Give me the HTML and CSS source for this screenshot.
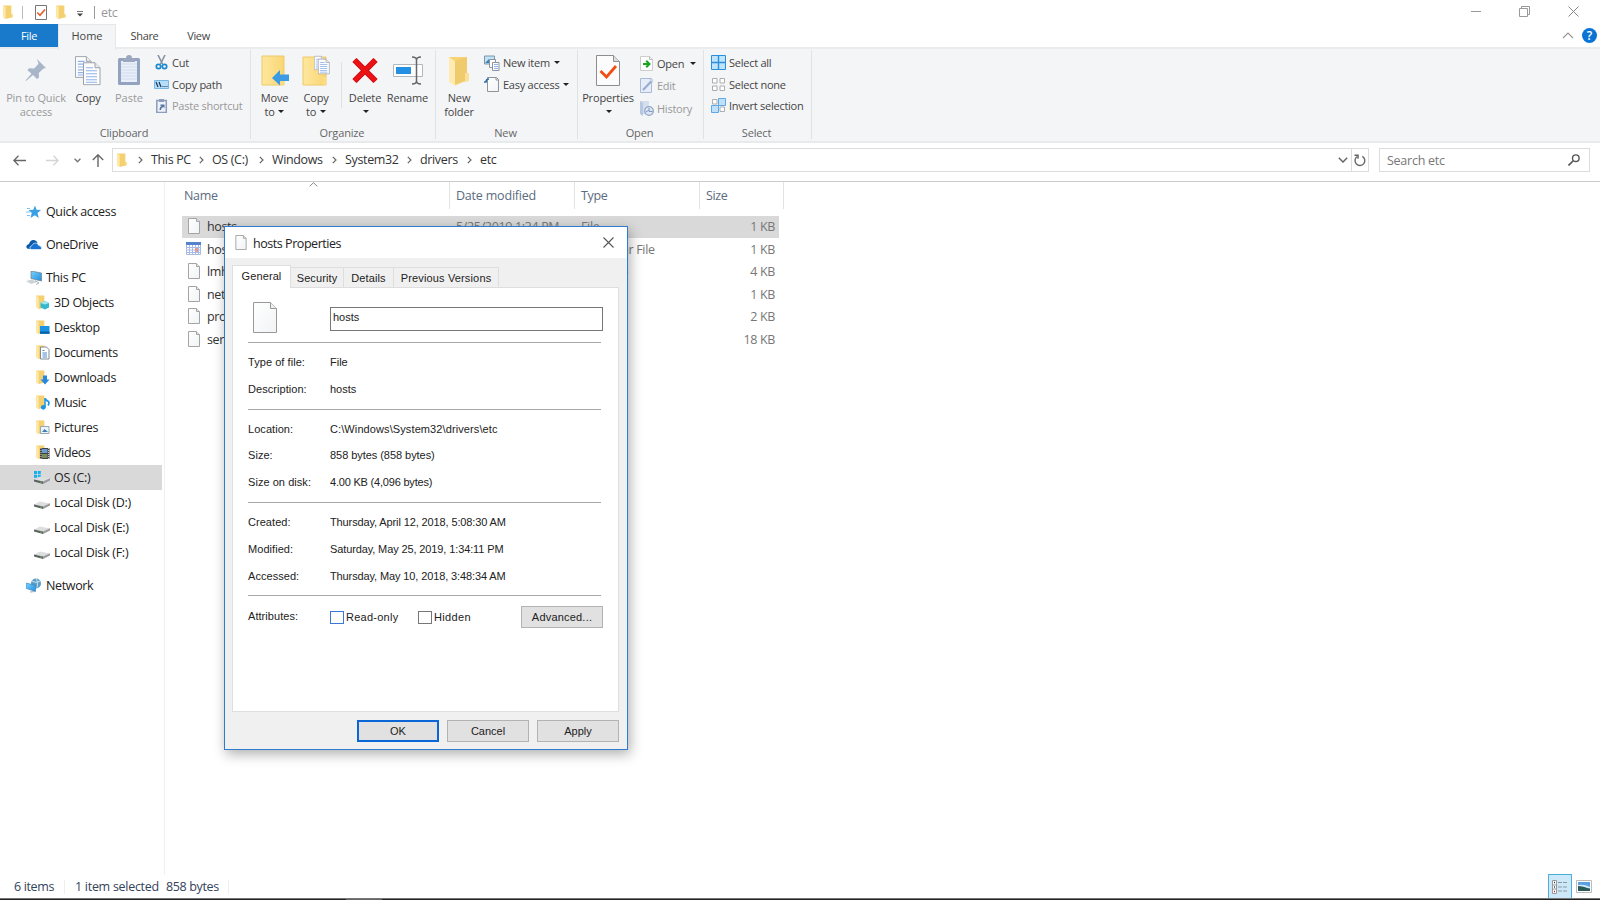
FILE: index.html
```html
<!DOCTYPE html>
<html lang="en">
<head>
<meta charset="utf-8">
<title>etc</title>
<link rel="stylesheet" href="styles.css">
</head>
<body>
<svg class="defs" width="0" height="0">
  <defs>
    <linearGradient id="gold" x1="0" x2="1"><stop offset="0" stop-color="#ffe79e"/><stop offset="1" stop-color="#f9d675"/></linearGradient>
    <linearGradient id="paper" x1="0" y1="0" x2="1" y2="1"><stop offset="0" stop-color="#fff"/><stop offset="1" stop-color="#f1f3f5"/></linearGradient>
    <linearGradient id="sky" x1="0" y1="0" x2="1" y2="1"><stop offset="0" stop-color="#7fd0fa"/><stop offset="1" stop-color="#1d8ee0"/></linearGradient>
    <symbol id="folder" viewBox="0 0 10 15"><path d="M0 .5h8.6v9.3H10V13L2.4 15 0 13z" fill="#f5d070"/><path d="M0 .7 2.5 2v13L0 13.2z" fill="#ffe9a8"/><path d="M8.6 9.8H10V13H8.6z" fill="#fbdc85"/></symbol>
    <symbol id="page" viewBox="0 0 12 16"><path d="M.5.5h8l3 3v12H.5z" fill="url(#paper)" stroke="#a4a4a4"/><path d="M8.5.5v3h3" fill="#e4e6e8" stroke="#a4a4a4"/></symbol>
    <symbol id="chev" viewBox="0 0 5 8"><path d="M.8.8 4 4 .8 7.2" fill="none" stroke="#666" stroke-width="1.2"/></symbol>
    <symbol id="disk" viewBox="0 0 16 9"><path d="M0 4.400 6 1.500l10 1.900-7 3.400z" fill="#dcdedf"/><path d="M0 4.400 9 6.600V9L0 6.600z" fill="#5c615f"/><path d="M9 6.600 16 3.200v2.400L9 9z" fill="#999c9d"/><path d="M6 7l1.500.4" stroke="#5fc25a"/></symbol>
    <symbol id="sheet" viewBox="0 0 18 23"><path d="M.5.5h11.5l5 5v17H.5z" fill="#fdfdfe" stroke="#9aa0a8"/><path d="M12 .5v5h5" fill="#e8eaec" stroke="#9aa0a8"/><path d="M3 5.500h7M3 8.500h11M3 11.500h11M3 14.500h11M3 17.500h11M3 20h11" stroke="#8fb4ec" stroke-width="1.200"/></symbol>
  </defs>
</svg>

<div class="window">
  <header class="titlebar">
    <svg class="tb-folder" width="10" height="14"><use href="#folder"/></svg>
    <i class="tb-sep"></i>
    <svg class="tb-check" width="12" height="15" viewBox="0 0 12 15"><path d="M.5.5h11v14H.5z" fill="#fff" stroke="#777"/><path d="M2.300 7.500 5 10.300 10 4.500" fill="none" stroke="#e8602c" stroke-width="1.700"/></svg>
    <svg class="tb-folder2" width="10" height="14"><use href="#folder"/></svg>
    <svg class="tb-more" width="6" height="6" viewBox="0 0 6 6"><path d="M0 .5h6" stroke="#777"/><path d="M0 2.500h6L3 5.500z" fill="#444"/></svg>
    <i class="tb-sep dark"></i>
    <span class="tb-title">etc</span>
    <div class="win-buttons">
      <svg width="10" height="10" viewBox="0 0 10 10"><path d="M0 4.500h10" stroke="#999"/></svg>
      <svg width="11" height="11" viewBox="0 0 11 11"><path d="M.5 2.500h8v8h-8zM2.500 2.500v-2h8v8h-2" fill="none" stroke="#999"/></svg>
      <svg width="11" height="11" viewBox="0 0 11 11"><path d="m.5.5 10 10m0-10-10 10" stroke="#888"/></svg>
    </div>
  </header>

  <nav class="tabs">
    <span class="tab file">File</span><span class="tab home">Home</span><span class="tab share">Share</span><span class="tab view">View</span>
    <div class="tab-tools">
      <svg width="12" height="7" viewBox="0 0 12 7"><path d="m1 6 5-5 5 5" fill="none" stroke="#999" stroke-width="1.200"/></svg>
      <span class="help">?</span>
    </div>
  </nav>

  <section class="ribbon">
    <div class="group g-clip">
      <div class="tools">
        <div class="big off pin"><svg width="34" height="31" viewBox="0 0 34 31"><path d="m17 4 9 9-2.500.4-4.700 4.600.2 4.500-2 1.600-4-4.200L6 26l-.5-.5 6-6.800L7.400 15l1.800-1.800 5 .2 4.300-4.700z" transform="translate(1)" fill="#a9b5c9"/></svg><span>Pin to Quick<br>access</span></div>
        <div class="big copy"><svg width="26" height="31" viewBox="0 0 26 31"><use href="#sheet" width="17" height="24"/><use href="#sheet" x="8" y="7" width="18" height="23.500"/></svg><span>Copy</span></div>
        <div class="big off paste"><svg width="24" height="31" viewBox="0 0 24 31"><rect x="1" y="3" width="22" height="27" rx="1.500" fill="#92a2bf"/><path d="M4 6h16v21H4z" fill="#e9eff8"/><path d="M4 9h16M4 12h16M4 15h16M4 18h16M4 21h16M4 24h16" stroke="#cfdcef"/><path d="M6 3h3q0-3 3-3t3 3h3v4H6z" fill="#9aa7bf"/></svg><span>Paste</span></div>
        <div class="small-list">
          <div class="small"><svg width="15" height="15" viewBox="0 0 15 15"><path d="m4 0 4.500 9M11 0 6.500 9" stroke="#8693a0" stroke-width="1.600"/><circle cx="4.500" cy="11.500" r="2.200" fill="none" stroke="#1e88cf" stroke-width="1.700"/><circle cx="10.500" cy="11.500" r="2.200" fill="none" stroke="#1e88cf" stroke-width="1.700"/></svg><span>Cut</span></div>
          <div class="small"><svg width="15" height="15" viewBox="0 0 15 15"><path d="M.5 3.500h14v8H.5z" fill="#b7def8" stroke="#77b5e2"/><path d="m2 5 2 5M5 5l2 5" stroke="#14365a" stroke-width="1.200"/><path d="M8.500 9.500h1m1 0h1m1 0h1" stroke="#14365a"/></svg><span>Copy path</span></div>
          <div class="small off"><svg width="15" height="15" viewBox="0 0 15 15"><path d="M2.800 2.500h9.500v12H2.800z" fill="#eef2f8" stroke="#8c9dbd" stroke-width="1.500"/><path d="M5 1h5v3H5z" fill="#8c9dbd"/><path d="M5.500 12q0-4 3-4H6.500V6.500h4v4L9.500 9Q7 9.500 7 12z" fill="#5874a2"/></svg><span>Paste shortcut</span></div>
        </div>
      </div>
      <div class="caption">Clipboard</div>
    </div>

    <div class="group g-org">
      <div class="tools">
        <div class="big move"><svg width="28" height="31" viewBox="0 0 28 31"><path d="M1 1h22v29H1z" fill="url(#gold)" stroke="#edca67"/><path d="M20 22h3v8h-3z" fill="#fbdc85"/><path d="m11 23 8-8v4.500h9V26h-9v4.500z" fill="#3d9be4"/></svg><span>Move<br>to <b class="dd"></b></span></div>
        <div class="big copyto"><svg width="28" height="31" viewBox="0 0 28 31"><path d="M1 2h23v28H1z" fill="url(#gold)" stroke="#edca67"/><path d="M21 22h3v8h-3z" fill="#fbdc85"/><use href="#sheet" x="12" y="0" width="11" height="16"/><use href="#sheet" x="16" y="3" width="12" height="17"/></svg><span>Copy<br>to <b class="dd"></b></span></div>
        <i class="inner-sep"></i>
        <div class="big delete"><svg width="28" height="31" viewBox="0 0 28 31"><path d="m3.500 5 21 21m0-21-21 21" stroke="#c40d12" stroke-width="6"/><path d="m3.500 5 21 21m0-21-21 21" stroke="#ec1115" stroke-width="4.200"/></svg><span>Delete<br><b class="dd"></b></span></div>
        <div class="big rename"><svg width="32" height="31" viewBox="0 0 32 31"><path d="M1.500 9.500h29v12h-29z" fill="#fff" stroke="#b4b8bc"/><path d="M4 12h15v7H4z" fill="#2490e4"/><path d="M20 2q4.500 0 4.500 3v21q0 3-4.500 3M29 2q-4.500 0-4.500 3v21q0 3 4.500 3" fill="none" stroke="#666" stroke-width="1.500"/></svg><span>Rename</span></div>
      </div>
      <div class="caption">Organize</div>
    </div>

    <div class="group g-new">
      <div class="tools">
        <div class="big newf"><svg width="20" height="31" viewBox="0 0 20 31"><path d="M0 2h18v16h2v8l-6 1-8 3.500L0 26z" fill="#f7d375"/><path d="m0 2 6 4v24.500L0 27z" fill="#ffebaf"/><path d="m6 6 12-4v16l-2 8-10 3z" fill="#efcb6d"/><path d="M16 18h4v8h-4z" fill="#fce09a"/></svg><span>New<br>folder</span></div>
        <div class="small-list">
          <div class="small"><svg width="16" height="16" viewBox="0 0 16 16"><path d="M.5 1h10v8H.5z" fill="#bfe3f7" stroke="#8394a4"/><path d="m1 8 4-4 4 4z" fill="#3a82bb"/><path d="M5.500 4.500h6v8h-6z" fill="#fff" stroke="#8d949c"/><path d="M8.500 7.500h6.500v8H8.500z" fill="#fff" stroke="#8d949c"/><path d="M10 9.500h4M10 11.500h4M10 13.500h4" stroke="#8fb4ec"/></svg><span>New item <b class="dd"></b></span></div>
          <div class="small"><svg width="16" height="16" viewBox="0 0 16 16"><path d="M3.500 1.500h9l2 2v12h-11z" fill="url(#paper)" stroke="#8d949c"/><path d="M12 1.500v2.500h2.500" fill="none" stroke="#8d949c"/><path d="M0 6h2q0-3 3-3" fill="none" stroke="#2b6fb3" stroke-width="1.600"/></svg><span>Easy access <b class="dd"></b></span></div>
        </div>
      </div>
      <div class="caption">New</div>
    </div>

    <div class="group g-open">
      <div class="tools">
        <div class="big props"><svg width="24" height="31" viewBox="0 0 24 31"><path d="M.5.5h17l6 6v24H.5z" fill="#fcfcfc" stroke="#8e8e8e"/><path d="M17.500.5v6h6" fill="#ddd" stroke="#8e8e8e"/><path d="m4.500 16 6 6L20 11" fill="none" stroke="#f04e12" stroke-width="2.800"/></svg><span>Properties<br><b class="dd"></b></span></div>
        <div class="small-list loose">
          <div class="small"><svg width="14" height="15" viewBox="0 0 14 15"><path d="M.5.5h9l3 3v11H.500z" fill="#fff" stroke="#cdcdcd"/><path d="M9.500.5v3h3" fill="none" stroke="#bbb"/><path d="M3 8h6M6.200 4.800 9.500 8l-3.300 3.200" fill="none" stroke="#17a51f" stroke-width="2"/></svg><span>Open <b class="dd far"></b></span></div>
          <div class="small off"><svg width="14" height="15" viewBox="0 0 14 15"><path d="M.5.5h11v14H.500z" fill="#e6edf8" stroke="#a9bbd8"/><path d="m3 12 9.500-10" stroke="#97abcc" stroke-width="2"/><path d="M9 1h4v4z" fill="#c9d6ea"/></svg><span>Edit</span></div>
          <div class="small off"><svg width="14" height="15" viewBox="0 0 14 15"><path d="M0 0h9v13H0z" fill="#d4deee"/><path d="m0 0 3 2v13l-3-2z" fill="#b7c7e0"/><circle cx="9" cy="10" r="4.300" fill="#dde6f3" stroke="#8fa5c8" stroke-width="1.300"/><path d="M9 7v3.500h3.500M6 11l3-2" fill="none" stroke="#8298bd"/></svg><span>History</span></div>
        </div>
      </div>
      <div class="caption">Open</div>
    </div>

    <div class="group g-sel">
      <div class="tools">
        <div class="small-list">
          <div class="small"><svg width="15" height="15" viewBox="0 0 15 15"><path d="M.5.5h14v14H.500z" fill="#bfe4fc" stroke="#2a8fdc"/><path d="M7.500 0v15M0 7.500h15" stroke="#2a8fdc" stroke-width="1.400"/></svg><span>Select all</span></div>
          <div class="small"><svg width="15" height="15" viewBox="0 0 15 15"><path d="M1.500 1.500h4.500v4.500H1.500zM9 1.500h4.500v4.500H9zM1.500 9h4.500v4.500H1.500zM9 9h4.500v4.500H9z" fill="#fff" stroke="#adadad"/></svg><span>Select none</span></div>
          <div class="small"><svg width="15" height="15" viewBox="0 0 15 15"><path d="M1.500 1.500h4.500v4.500H1.500zM9 9h4.500v4.500H9z" fill="#fff" stroke="#adadad"/><path d="M7.500.5h7v7h-7zM.5 7.500h7v7h-7z" fill="#bfe0fb" stroke="#5fa9e6"/></svg><span>Invert selection</span></div>
        </div>
      </div>
      <div class="caption">Select</div>
    </div>
  </section>

  <section class="address">
    <div class="arrows">
      <svg width="13" height="11" viewBox="0 0 13 11"><path d="M5.500.8.900 5.500l4.600 4.700M1 5.500h12" fill="none" stroke="#666" stroke-width="1.300"/></svg>
      <svg width="13" height="11" viewBox="0 0 13 11"><path d="m7.500.8 4.600 4.700-4.600 4.700M12 5.500H0" fill="none" stroke="#d4d4d4" stroke-width="1.300"/></svg>
      <svg width="7" height="5" viewBox="0 0 7 5"><path d="m.6.7 2.900 3 2.900-3" fill="none" stroke="#777" stroke-width="1.400"/></svg>
      <svg width="12" height="13" viewBox="0 0 12 13"><path d="m.8 6 5.200-5.200L11.200 6M6 1v12" fill="none" stroke="#666" stroke-width="1.400"/></svg>
    </div>
    <div class="path">
      <svg width="10" height="14"><use href="#folder"/></svg>
      <svg class="cv" width="5" height="8"><use href="#chev"/></svg><span class="p1">This PC</span>
      <svg class="cv" width="5" height="8"><use href="#chev"/></svg><span class="p2">OS (C:)</span>
      <svg class="cv" width="5" height="8"><use href="#chev"/></svg><span class="p3">Windows</span>
      <svg class="cv" width="5" height="8"><use href="#chev"/></svg><span class="p4">System32</span>
      <svg class="cv" width="5" height="8"><use href="#chev"/></svg><span class="p5">drivers</span>
      <svg class="cv" width="5" height="8"><use href="#chev"/></svg><span class="p6">etc</span>
      <svg class="path-drop" width="10" height="6" viewBox="0 0 10 6"><path d="m.8.8 4.200 4.200L9.200.8" fill="none" stroke="#666" stroke-width="1.500"/></svg>
      <div class="refresh"><svg width="12" height="13" viewBox="0 0 12 13"><path d="M8.300 2.300A4.900 4.900 0 1 1 3.200 2.500M0.500 1.200h3.600v3.600" fill="none" stroke="#666" stroke-width="1.400"/></svg></div>
    </div>
    <div class="search"><span>Search etc</span><svg width="12" height="12" viewBox="0 0 12 12"><circle cx="7.800" cy="4.200" r="3.300" fill="none" stroke="#555" stroke-width="1.400"/><path d="m5.500 6.500-5 5" stroke="#555" stroke-width="1.600"/></svg></div>
  </section>

  <main class="content">
    <aside class="sidebar">
      <div class="item top"><svg width="16" height="14" viewBox="0 0 16 14"><path d="m9 .5 1.500 4.300 4.500.2-3.500 3 1.200 5L8.800 10.200 4.500 13l1.300-5-3.300-3 4.800-.3z" fill="#3b9fe6"/><path d="M1 3.500h3M0 7h4M1 10.500h3" stroke="#7cc2f2"/></svg><span>Quick access</span></div>
      <div class="item top gap"><svg width="16" height="14" viewBox="0 0 16 14"><path d="M1 10.500Q-1 7 3 6 4.500 1.500 8 2q3 .3 3.500 3L4 11z" fill="#0c58ab"/><path d="M4.500 11.500Q2.500 8.500 6 7.500 7 4.500 10 5q2 .3 2.500 2.300Q16 8 15.500 10.500l-1 1z" fill="#1673d2" stroke="#fff" stroke-width=".6"/></svg><span>OneDrive</span></div>
      <div class="item top gap"><svg width="16" height="14" viewBox="0 0 16 14"><path d="m5 0 10.500 2v8L5 7.500z" fill="url(#sky)" stroke="#6c7c8a" stroke-width=".7"/><path d="m0 10 6-1.500 5 2.500-6 2z" fill="#ccd2d6"/><path d="m9 9.500 4 2.500-3 1.500" fill="none" stroke="#aab2b8"/></svg><span>This PC</span></div>
      <div class="item"><svg width="14" height="15" viewBox="0 0 14 15"><use href="#folder" width="10" height="14"/><path d="m4.500 8 4.500-2 4 2v4.500L9 14.500l-4.500-2z" fill="#36b9cf"/><path d="m4.500 8 4.500 1.500L13 8 9 6z" fill="#a3e8f0"/></svg><span>3D Objects</span></div>
      <div class="item"><svg width="14" height="15" viewBox="0 0 14 15"><use href="#folder" width="10" height="14"/><path d="M4 6h9.500v8H4z" fill="#1b94e6"/><path d="M4 12.500h9.500" stroke="#0d5ea3" stroke-width="2"/></svg><span>Desktop</span></div>
      <div class="item"><svg width="14" height="15" viewBox="0 0 14 15"><use href="#folder" width="10" height="14"/><path d="M4.500 2h6l2.500 2.500V14H4.500z" fill="#fff" stroke="#808a94"/><path d="M6.500 5.500h2M6.500 8H11M6.500 10H11M6.500 12H11" stroke="#4c88c8"/></svg><span>Documents</span></div>
      <div class="item"><svg width="14" height="15" viewBox="0 0 14 15"><use href="#folder" width="10" height="14"/><path d="M7 5.500h4v4h2.500L9 14.500 4.500 9.500H7z" fill="#2789dd"/></svg><span>Downloads</span></div>
      <div class="item"><svg width="14" height="15" viewBox="0 0 14 15"><use href="#folder" width="10" height="14"/><path d="M9 3.500q1 2 3.500 3 1 2-.5 4" fill="none" stroke="#1b94e6" stroke-width="1.700"/><path d="M9 3v9" stroke="#1b94e6" stroke-width="1.500"/><circle cx="7.300" cy="12.300" r="2.400" fill="#1b94e6"/></svg><span>Music</span></div>
      <div class="item"><svg width="14" height="15" viewBox="0 0 14 15"><use href="#folder" width="10" height="14"/><path d="M4.500 6.500H13V13.500H4.500z" fill="#e9f5fd" stroke="#9aa5ae"/><path d="m6 12 2.500-3L12 12z" fill="#437eae"/></svg><span>Pictures</span></div>
      <div class="item"><svg width="14" height="15" viewBox="0 0 14 15"><use href="#folder" width="10" height="14"/><path d="M4 3h9.500v11H4z" fill="#414141"/><path d="M6 4h5.500v4H6z" fill="#6a9bd0"/><path d="M6 9h5.500v4H6z" fill="#7b8c60"/><path d="M5 3v11M12.600 3v11" stroke="#ddd" stroke-dasharray="1 1"/></svg><span>Videos</span></div>
      <div class="item drive chosen"><svg width="16" height="15" viewBox="0 0 16 15"><path d="M0 1h3v3H0zM3.800 1h3v3h-3zM0 4.800h3v3H0zM3.800 4.800h3v3h-3z" fill="#16b0ee"/><use href="#disk" y="5" width="16" height="9"/></svg><span>OS (C:)</span></div>
      <div class="item drive"><svg width="16" height="15" viewBox="0 0 16 15"><use href="#disk" y="5" width="16" height="9"/></svg><span>Local Disk (D:)</span></div>
      <div class="item drive"><svg width="16" height="15" viewBox="0 0 16 15"><use href="#disk" y="5" width="16" height="9"/></svg><span>Local Disk (E:)</span></div>
      <div class="item drive"><svg width="16" height="15" viewBox="0 0 16 15"><use href="#disk" y="5" width="16" height="9"/></svg><span>Local Disk (F:)</span></div>
      <div class="item top gap"><svg width="16" height="15" viewBox="0 0 16 15"><circle cx="10" cy="5.500" r="5" fill="#5d9cc4"/><path d="M6 3q4 3 8 0M10 .5q3 4 1 9" fill="none" stroke="#c3e4f2"/><path d="m.5 5 9 2.500v6L.5 10.500z" fill="url(#sky)" stroke="#2b82c4" stroke-width=".6"/><path d="m4 14 5-.5" stroke="#aaa"/></svg><span>Network</span></div>
    </aside>

    <div class="files">
      <div class="cols">
        <span class="c-name">Name<svg class="sort" width="9" height="5" viewBox="0 0 9 5"><path d="m.7 4.300 3.800-3.600 3.800 3.600" fill="none" stroke="#888"/></svg></span><span class="c-date">Date modified</span><span class="c-type">Type</span><span class="c-size">Size</span>
      </div>
      <div class="row chosen"><svg width="12" height="16"><use href="#page"/></svg><span class="r-name">hosts</span><span class="r-date">5/25/2019 1:34 PM</span><span class="r-type">File</span><span class="r-size">1 KB</span></div>
      <div class="row cal"><svg width="15" height="13" viewBox="0 0 15 13"><path d="M.5.5h14v12H.5z" fill="#fff" stroke="#a9bbd8"/><path d="M0 0h15v3H0z" fill="#5583cb"/><path d="M1 5.500h13M1 8h13M1 10.500h13M3.500 3v9M6.500 3v9M9.500 3v9M12.500 3v9" stroke="#a5bde8"/><path d="M9 6h3v4H9z" fill="#e39a9a"/></svg><span class="r-name">hosts</span><span class="r-date"></span><span class="r-type">iCalendar File</span><span class="r-size">1 KB</span></div>
      <div class="row"><svg width="12" height="16"><use href="#page"/></svg><span class="r-name">lmh</span><span class="r-date"></span><span class="r-type sam">SAM File</span><span class="r-size">4 KB</span></div>
      <div class="row"><svg width="12" height="16"><use href="#page"/></svg><span class="r-name">networks</span><span class="r-date"></span><span class="r-type">File</span><span class="r-size">1 KB</span></div>
      <div class="row"><svg width="12" height="16"><use href="#page"/></svg><span class="r-name">protocol</span><span class="r-date"></span><span class="r-type">File</span><span class="r-size">2 KB</span></div>
      <div class="row"><svg width="12" height="16"><use href="#page"/></svg><span class="r-name">services</span><span class="r-date"></span><span class="r-type">File</span><span class="r-size">18 KB</span></div>
    </div>
  </main>

  <footer class="status">
    <span class="s1">6 items</span><span class="s2">1 item selected</span><span class="s3">858 bytes</span>
    <div class="views">
      <span class="details"><svg width="16" height="14" viewBox="0 0 16 14"><path d="M.5.5h4v13h-4zM0 5h5M0 9h5" fill="#fff" stroke="#999"/><path d="M2 2.500h1M2 7h1" stroke="#246" stroke-width="1.500"/><path d="M2 11.500h1" stroke="#c22" stroke-width="1.500"/><path d="M6 2.500h4M11 2.500h4M6 7h4M11 7h4M6 11h4M11 11h4" stroke="#8b98a2"/></svg></span>
      <svg width="16" height="13" viewBox="0 0 16 13"><path d="M.5.5h15v12H.5z" fill="#fff" stroke="#bbb"/><path d="M2 2h12v9H2z" fill="#5aa0e4"/><path d="M2 5q6-1 12 2v1H2z" fill="#d2ecfa"/><path d="M2 6q5 0 12 3v2H2z" fill="#2c5a58"/></svg>
    </div>
  </footer>
  <div class="taskbar"><i></i></div>
</div>

<div class="dialog">
  <div class="d-title"><svg width="12" height="15" preserveAspectRatio="none"><use href="#page"/></svg><span>hosts Properties</span><svg class="d-close" width="11" height="11" viewBox="0 0 11 11"><path d="m.5.5 10 10m0-10-10 10" stroke="#555" stroke-width="1.100"/></svg></div>
  <div class="d-tabs"><span class="dt on">General</span><span class="dt t2">Security</span><span class="dt t3">Details</span><span class="dt t4">Previous Versions</span></div>
  <div class="panel">
    <div class="name-row"><svg width="24" height="31" viewBox="0 0 24 31"><path d="M.5.5h17l6 6v24H.5z" fill="url(#paper)" stroke="#999"/><path d="M17.500.5v6h6" fill="#eee" stroke="#999"/></svg><div class="field">hosts</div></div>
    <hr>
    <div class="props-rows">
      <div class="pr"><span class="k">Type of file:</span><span>File</span></div>
      <div class="pr"><span class="k">Description:</span><span>hosts</span></div>
    </div>
    <hr>
    <div class="props-rows">
      <div class="pr"><span class="k">Location:</span><span class="loc">C:\Windows\System32\drivers\etc</span></div>
      <div class="pr"><span class="k">Size:</span><span class="num">858 bytes (858 bytes)</span></div>
      <div class="pr"><span class="k">Size on disk:</span><span class="disk">4.00 KB (4,096 bytes)</span></div>
    </div>
    <hr>
    <div class="props-rows">
      <div class="pr"><span class="k">Created:</span><span class="when">Thursday, April 12, 2018, 5:08:30 AM</span></div>
      <div class="pr"><span class="k">Modified:</span><span class="when">Saturday, May 25, 2019, 1:34:11 PM</span></div>
      <div class="pr"><span class="k">Accessed:</span><span class="when">Thursday, May 10, 2018, 3:48:34 AM</span></div>
    </div>
    <hr>
    <div class="attrs"><span class="k">Attributes:</span><i class="box blue"></i><span class="ro">Read-only</span><i class="box"></i><span class="hid">Hidden</span><span class="btn adv">Advanced...</span></div>
  </div>
  <div class="d-buttons"><span class="btn ok">OK</span><span class="btn">Cancel</span><span class="btn">Apply</span></div>
</div>
</body>
</html>
```
FILE: styles.css
```css
* { box-sizing: border-box; }
body { margin: 0; width: 1600px; height: 900px; overflow: hidden; background: #fff; font-family: "Open Sans", "Noto Sans", sans-serif; font-size: 12.5px; letter-spacing: -.35px; color: #222; white-space: nowrap; }
svg { display: block; flex: none; }
i { display: block; flex: none; }
.defs { position: absolute; }
.window { display: flex; flex-direction: column; height: 900px; }

/* title bar */
.titlebar { height: 24px; display: flex; align-items: center; padding-left: 3px; flex: none; }
.tb-sep { width: 1px; height: 13px; background: #bbb; margin-left: 9px; }
.tb-sep.dark { background: #999; margin-left: 11px; }
.tb-check { margin-left: 12px; }
.tb-folder2 { margin-left: 9px; }
.tb-more { margin: 3px 0 0 11px; }
.tb-title { margin-left: 6px; color: #999; }
.win-buttons { margin-left: auto; display: flex; align-items: center; gap: 38px; padding: 0 21px 1px 0; }

/* ribbon tabs */
.tabs { height: 23px; display: flex; flex: none; font-size: 11px; color: #444; }
.tab { height: 23px; line-height: 23px; text-align: center; }
.file { width: 58px; background: #1979ca; color: #fff; }
.home { width: 58px; background: #f4f5f7; border: 1px solid #e6e7e8; border-bottom: 0; z-index: 1; height: 26px; line-height: 21px; letter-spacing: 0; }
.share { width: 57px; }
.view { width: 51px; }
.tab-tools { margin-left: auto; display: flex; align-items: center; gap: 8px; padding-right: 3px; }
.help { width: 15px; height: 15px; border-radius: 50%; background: #0a74d6; color: #fff; font-weight: 600; font-size: 12px; line-height: 15px; text-align: center; letter-spacing: 0; }

/* ribbon */
.ribbon { height: 96px; flex: none; display: flex; background: #f4f5f7; border-top: 2px solid #eaecee; border-bottom: 2px solid #e8eaec; font-size: 11px; color: #444; letter-spacing: -.15px; }
.group { margin-top: 1px; height: 89px; border-right: 1px solid #e0e2e4; display: flex; flex-direction: column; flex: none; }
.g-clip { width: 251px; } .g-org { width: 185px; } .g-new { width: 142px; } .g-open { width: 126px; } .g-sel { width: 108px; }
.tools { display: flex; height: 75px; flex: none; }
.caption { text-align: center; line-height: 16px; color: #666; padding-right: 2px; }
.big { display: flex; flex-direction: column; align-items: center; padding-top: 5px; text-align: center; line-height: 14px; }
.big span { margin-top: 5px; }
.off { color: #999; }
.pin { width: 72px; } .copy { width: 32px; } .paste { width: 50px; letter-spacing: 0; }
.move { width: 47px; } .copyto { width: 36px; } .delete { width: 46px; } .rename { width: 39px; }
.newf { width: 46px; } .props { width: 60px; }
.inner-sep { width: 1px; height: 46px; background: #dfe1e3; margin: 12px 0 0 7px; }
.dd { display: inline-block; border: 3px solid transparent; border-top: 3px solid #222; border-bottom: 0; vertical-align: 3px; margin-left: 1px; }
.dd.far { margin-left: 3px; }
.small-list { display: flex; flex-direction: column; padding-top: 2px; letter-spacing: -.25px; }
.small { height: 21.600px; display: flex; align-items: center; gap: 3px; flex: none; }
.loose { padding-top: 2px; } .loose .small { height: 22.500px; gap: 3px; }
.g-new .small-list { padding-left: 2px; }
.g-open .small-list { padding-left: 2px; }
.g-sel .small-list { padding-left: 7px; }

/* address bar */
.address { height: 39px; flex: none; display: flex; align-items: flex-start; border-bottom: 1px solid #ccc; padding-top: 5px; }
.arrows { width: 112px; height: 25px; padding-left: 13px; display: flex; align-items: center; }
.arrows svg:nth-child(2) { margin-left: 20px; }
.arrows svg:nth-child(3) { margin-left: 15px; }
.arrows svg:nth-child(4) { margin-left: 11px; }
.path { width: 1257px; height: 24px; border: 1px solid #dcdcdc; display: flex; align-items: center; padding-left: 4px; color: #333; }
.path span { margin-top: -1px; }
.cv { margin-right: 8px; margin-left: 1px; }
.path > svg:first-child { margin-right: 10px; }
.p1 { width: 47px; } .p2 { width: 46px; } .p3 { width: 59px; } .p4 { width: 61px; } .p5 { width: 46px; }
.path-drop { margin-left: auto; margin-right: 3px; }
.refresh { width: 17px; height: 22px; border-left: 1px solid #dcdcdc; display: flex; align-items: center; justify-content: center; }
.search { width: 211px; height: 24px; margin-left: 10px; border: 1px solid #dcdcdc; display: flex; align-items: center; justify-content: space-between; padding: 0 9px 0 7px; color: #777; letter-spacing: -.25px; }

/* content */
.content { flex: 1; display: flex; min-height: 0; }
.sidebar { width: 165px; height: 693px; border-right: 1px solid #f0f0f0; padding-top: 17px; flex: none; }
.item { height: 25px; display: flex; align-items: center; padding-left: 36px; gap: 4px; margin-right: 2px; }
.item.top { padding-left: 26px; }
.item.gap { margin-top: 8px; }
.item.drive { padding-left: 34px; letter-spacing: -.28px; }
.chosen { background: #d9d9d9; }
.files { width: 620px; }
.cols { display: flex; height: 27px; line-height: 27px; color: #5b6b80; margin-bottom: 6.500px; }
.cols span { border-right: 1px solid #e3e3e3; }
.c-name { width: 285px; padding-left: 19px; position: relative; }
.sort { position: absolute; left: 144px; top: 0; }
.c-date { width: 125px; padding-left: 6px; letter-spacing: -.2px; }
.c-type { width: 125px; padding-left: 6px; }
.c-size { width: 84px; padding-left: 6px; }
.row { margin-left: 17px; width: 597px; height: 22.500px; display: flex; align-items: center; padding: 0 4px 0 6px; color: #777; }
.row svg { margin-right: 7px; margin-top: -1px; }
.row.cal { padding-left: 4px; } .row.cal svg { margin-right: 6px; }
.r-name { width: 249px; color: #333; }
.r-date { width: 125px; }
.r-type.sam { letter-spacing: -.2px; }
.r-size { margin-left: auto; }

/* status bar */
.status { height: 24px; flex: none; display: flex; align-items: center; color: #34425a; }
.status > span { line-height: 14px; margin-top: 2px; }
.s1 { width: 65px; padding-left: 14px; border-right: 1px solid #eee; }
.s2 { width: 101px; padding-left: 10px; letter-spacing: -.28px; }
.s3 { width: 63px; border-right: 1px solid #eee; }
.views { margin-left: auto; display: flex; align-items: center; gap: 4px; padding-right: 8px; }
.views > svg { margin-top: 1px; }
.details { width: 24px; height: 24px; background: #cde8f8; border: 1px solid #4aaee0; border-bottom: 0; display: flex; align-items: center; justify-content: center; }
.taskbar { height: 2px; background: #222; border-top: 1px solid #777; flex: none; }
.taskbar i { margin-left: 346px; width: 36px; height: 1px; background: #666; }

/* properties dialog, floating above the explorer window */
.dialog { position: absolute; left: 224px; top: 226px; width: 404px; height: 524px; border: 1px solid #2e7cd0; background: #f0f0f0; box-shadow: 2px 4px 12px rgba(0,0,0,.32); font-family: "Liberation Sans", sans-serif; font-size: 11px; letter-spacing: 0; color: #222; }
.d-title { height: 31px; background: #fff; display: flex; align-items: center; padding: 0 13px 0 10px; font-family: "Open Sans", sans-serif; font-size: 12.500px; letter-spacing: -.45px; }
.d-title span { margin: 1px 0 0 6px; }
.d-close { margin-left: auto; }
.d-tabs { height: 29px; padding-left: 7px; display: flex; align-items: flex-end; }
.dt { height: 20px; line-height: 21px; text-align: center; border: 1px solid #dedede; border-left: 0; border-bottom: 0; letter-spacing: .1px; }
.dt.on { width: 59px; height: 23px; line-height: 21px; background: #fff; border: 1px solid #dedede; border-bottom: 0; margin-bottom: -1px; z-index: 1; }
.t2 { width: 53px; } .t3 { width: 50px; } .t4 { width: 105px; letter-spacing: .15px; }
.panel { margin-left: 7px; width: 387px; height: 425px; background: #fff; border: 1px solid #dedede; padding: 14px 15px 0 15px; }
.name-row { display: flex; height: 40px; padding-left: 5px; }
.field { margin: 5px 0 0 53px; width: 274px; height: 24px; border: 1px solid #777; line-height: 18px; padding-left: 2px; }
hr { border: 0; height: 1px; background: #a8a8a8; margin: 0 2px 0 0; }
.props-rows { padding: 6px 0; }
.pr { height: 26.800px; line-height: 27px; display: flex; }
.k { width: 82px; flex: none; letter-spacing: .05px; }
.loc { letter-spacing: .1px; }
.num { letter-spacing: -.05px; }
.disk { letter-spacing: -.2px; }
.when { letter-spacing: -.12px; }
.attrs { display: flex; align-items: center; height: 42px; width: 360px; }
.attrs .k { margin-top: -2px; }
.box { width: 14px; height: 13px; border: 1px solid #777; background: #fff; }
.box.blue { border-color: #3b78d8; }
.ro { width: 74px; padding-left: 2px; letter-spacing: .25px; } .hid { padding-left: 2px; letter-spacing: .35px; }
.btn { width: 82px; height: 22px; line-height: 20px; text-align: center; background: #e1e1e1; border: 1px solid #b3b3b3; }
.adv { margin-left: auto; letter-spacing: .2px; margin-right: 5px; }
.d-buttons { display: flex; gap: 8px; justify-content: flex-end; padding: 8px 8px 0 0; }
.btn.ok { border: 2px solid #0a66d6; line-height: 18px; }
```
